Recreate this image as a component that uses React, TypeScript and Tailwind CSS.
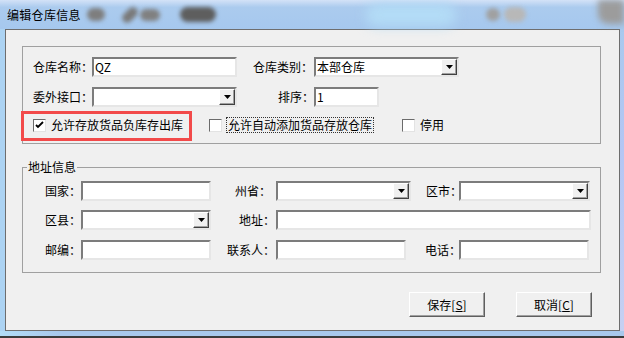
import React from 'react';

const sunken = "bg-white border-2 border-t-[#7c7c7c] border-l-[#7c7c7c] border-r-[#e6e6e6] border-b-[#e6e6e6]";

function Input({ className, value }: { className: string; value?: string }) {
    return (
        <div className={`${className} h-[20px] ${sunken} flex items-center pl-[1px] text-[12px] leading-none text-black`}>
            {value}
        </div>
    );
}

function Select({ className, value }: { className: string; value?: string }) {
    return (
        <div className={`${className} h-[20px] ${sunken} flex items-center justify-between pl-[1px] text-[12px] leading-none text-black`}>
            <span>{value}</span>
            <div className="w-[16px] h-[16px] bg-[#f0f0f0] border border-t-[#ffffff] border-l-[#ffffff] border-r-[#404040] border-b-[#404040] shadow-[inset_-1px_-1px_0_#a0a0a0] flex items-center justify-center">
                <svg width="7" height="4" viewBox="0 0 7 4">
                    <path d="M0 0h7L3.5 4z" fill="#000" />
                </svg>
            </div>
        </div>
    );
}

function Check({ checked }: { checked?: boolean }) {
    return (
        <div className="w-[13px] h-[13px] bg-white border border-t-[#6b6b6b] border-l-[#6b6b6b] border-r-[#e3e3e3] border-b-[#e3e3e3] flex items-center justify-center shrink-0">
            {checked && (
                <svg width="9" height="9" viewBox="0 0 9 9">
                    <path d="M1 4l2 2 5-5" fill="none" stroke="#000" strokeWidth="1.8" />
                </svg>
            )}
        </div>
    );
}

function Button({ label, hot }: { label: string; hot: string }) {
    return (
        <div className="w-[76px] h-[25px] bg-[#f0f0f0] border border-t-[#ffffff] border-l-[#ffffff] border-r-[#5f5f5f] border-b-[#5f5f5f] shadow-[inset_-1px_-1px_0_#a0a0a0] flex items-center justify-center text-[12px] text-black leading-none">
            {label}[<span className="underline">{hot}</span>]
        </div>
    );
}

export default function App() {
    return (
        <div className="w-[624px] h-[338px] flex flex-col bg-[#a9cbee] overflow-hidden font-['Noto_Sans_CJK_SC',sans-serif] text-black">
            {/* title bar, blurred blobs stand in for the redacted bits */}
            <div className="h-[29px] flex items-center pl-[7px] bg-[linear-gradient(180deg,#d3e2f7_0%,#abcbee_25%,#a6c8ee_100%)]">
                <span className="text-[12px] leading-none tracking-[0.3px]">编辑仓库信息</span>
                <div className="ml-[6px] w-[18px] h-[13px] rounded-full bg-[#7e7e7e] blur-[2px]" />
                <div className="ml-[16px] w-[18px] h-[10px] rounded-full bg-[#7a7a7a] blur-[2px] -rotate-45" />
                <div className="ml-[1px] w-[20px] h-[12px] rounded-full bg-[#808080] blur-[2px]" />
                <div className="ml-[20px] w-[36px] h-[15px] rounded-full bg-[#5e5e5e] blur-[2px]" />
                <div className="ml-[150px] w-[90px] h-[22px] rounded-full bg-[#b3dcf6] blur-[6px]" />
                <div className="ml-[30px] w-[14px] h-[13px] rounded-full bg-[#a0a0a0] blur-[2px]" />
                <div className="ml-[4px] w-[22px] h-[15px] rounded-full bg-[#b8b8b8] blur-[2px]" />
                <div className="ml-auto self-start w-[26px] h-[24px] rounded-bl-[10px] bg-[#9c9c9c] blur-[3px]" />
            </div>

            <div className="flex h-[302px]">
                <div className="w-[5px] bg-[#acd3f3]" />
                <div className="w-[615px] h-[302px] border border-[#6e6e6e] bg-[#f0f0f0]">
                    {/* group 1 */}
                    <div className="relative ml-[16px] mt-[16px] w-[579px] h-[98px] border border-[#a0a0a0] pl-[10px] pt-[10px] text-[12px] leading-none">
                        <div className="flex items-center h-[20px]">
                            <div className="w-[59px] whitespace-nowrap">仓库名称：</div>
                            <Input className="w-[145px]" value="QZ" />
                            <div className="ml-[16px] w-[61px] whitespace-nowrap">仓库类别：</div>
                            <Select className="w-[145px]" value="本部仓库" />
                        </div>
                        <div className="flex items-center h-[20px] mt-[10px]">
                            <div className="w-[59px] whitespace-nowrap">委外接口：</div>
                            <Select className="w-[145px]" />
                            <div className="ml-[16px] w-[61px] pl-[25px] whitespace-nowrap">排序：</div>
                            <Input className="w-[65px]" value="1" />
                        </div>
                        <div className="flex items-center h-[16px] mt-[10px]">
                            <div className="w-[176px] flex items-center">
                                <Check checked />
                                <span className="ml-[5px] whitespace-nowrap">允许存放货品负库存出库</span>
                            </div>
                            <div className="w-[193px] flex items-center">
                                <Check />
                                <span className="ml-[4px] px-[1px] py-[1px] border border-dotted border-[#333] whitespace-nowrap">允许自动添加货品存放仓库</span>
                            </div>
                            <Check />
                            <span className="ml-[5px]">停用</span>
                        </div>
                        <div className="absolute left-[-2px] top-[64px] w-[171px] h-[30px] border-[3px] border-[#f24a4a]" />
                    </div>

                    {/* group 2 */}
                    <div className="relative ml-[16px] mt-[23px] w-[579px] h-[106px] border border-[#a0a0a0] pt-[13px] text-[12px] leading-none">
                        <div className="absolute left-[4px] top-[-7px] bg-[#f0f0f0] px-[1px] leading-none">地址信息</div>
                        <div className="flex items-center h-[20px]">
                            <div className="w-[58px] pl-[22px] whitespace-nowrap">国家：</div>
                            <Input className="w-[130px]" />
                            <div className="w-[65px] pl-[24px] whitespace-nowrap">州省：</div>
                            <Select className="w-[135px]" />
                            <div className="w-[48px] pl-[15px] whitespace-nowrap">区市：</div>
                            <Select className="w-[131px]" />
                        </div>
                        <div className="flex items-center h-[20px] mt-[9px]">
                            <div className="w-[58px] pl-[22px] whitespace-nowrap">区县：</div>
                            <Select className="w-[130px]" />
                            <div className="w-[65px] pl-[28px] whitespace-nowrap">地址：</div>
                            <Input className="w-[315px]" />
                        </div>
                        <div className="flex items-center h-[20px] mt-[10px]">
                            <div className="w-[58px] pl-[22px] whitespace-nowrap">邮编：</div>
                            <Input className="w-[130px]" />
                            <div className="w-[65px] pl-[16px] whitespace-nowrap">联系人：</div>
                            <Input className="w-[130px]" />
                            <div className="w-[53px] pl-[19px] whitespace-nowrap">电话：</div>
                            <Input className="w-[130px]" />
                        </div>
                    </div>

                    <div className="flex ml-[403px] mt-[19px]">
                        <Button label="保存" hot="S" />
                        <div className="ml-[31px]">
                            <Button label="取消" hot="C" />
                        </div>
                    </div>
                </div>
                <div className="flex-1 bg-[linear-gradient(180deg,#a9c9ee,#b4c6f4_40%,#c6d0f2)]" />
            </div>
            <div className="h-[5px] bg-[linear-gradient(90deg,#b2dcf7_0%,#a8c8ec_10%,#a8c8ec_100%)]" />
            <div className="h-[2px] bg-[#3c3c3c]" />
        </div>
    );
}
